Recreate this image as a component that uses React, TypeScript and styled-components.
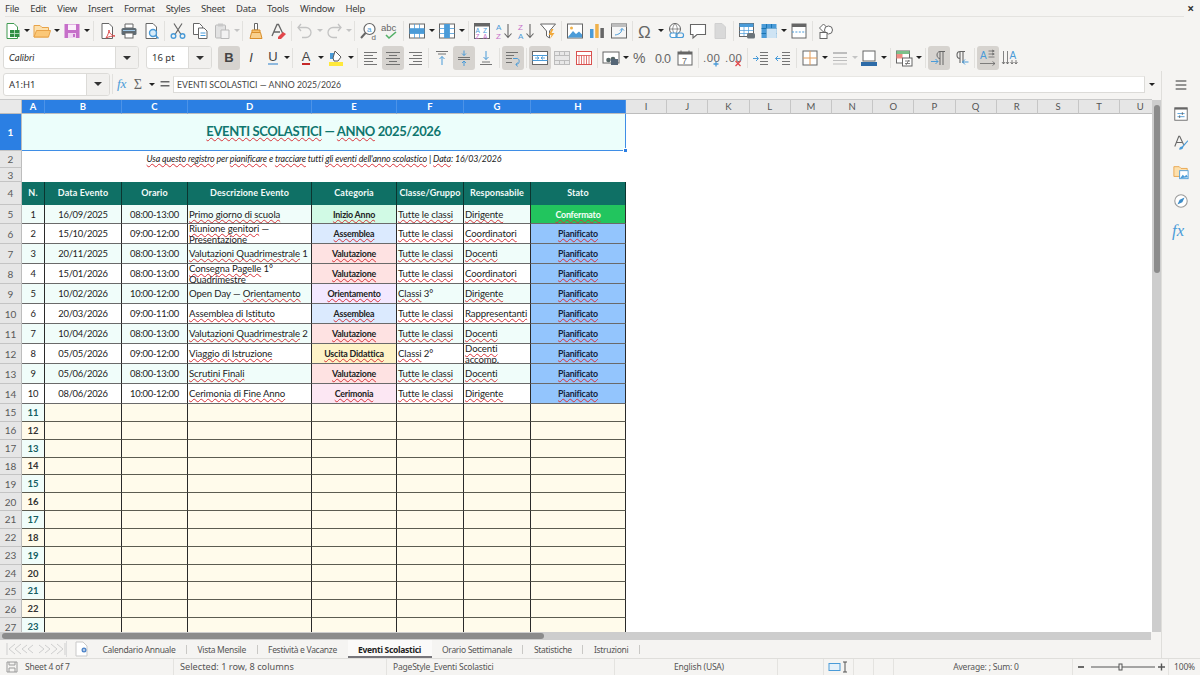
import React, { ReactNode } from 'react';
import styled, { createGlobalStyle } from 'styled-components';

const Global = createGlobalStyle`
  html, body { margin: 0; padding: 0; background: #f5f4f2; }
  * { box-sizing: border-box; }
`;
const UI = `"Noto Sans", "Open Sans", sans-serif`;
const CELL = `Lato, "Liberation Sans", sans-serif`;
const COLS = '22px 23px 77px 66px 124px 85px 67px 67px 95px';

const Window = styled.div`
  width: 1200px; height: 675px; overflow: hidden; display: flex; flex-direction: column;
  background: #f5f4f2; font-family: ${UI}; color: #3c3c3c;
`;
const MenuBar = styled.div`
  height: 17px; display: flex; align-items: center; justify-content: space-between; padding-left: 5px;
`;
const MenuList = styled.div`display: flex; gap: 11px; font-size: 9.5px; letter-spacing: -.25px; height: 17px; align-items: center; width: 1179px; border-bottom: 1px solid #e4e3e0;`;
const CloseMark = styled.div`width: 16px; padding-right: 6px; text-align: right; font-size: 12px; font-weight: 700; color: #333;`;
const ToolRow = styled.div`height: 27px; display: flex; align-items: center; padding-left: 1px;`;
const ToolRowTwo = styled(ToolRow)`padding-left: 3px;`;
const ToolBtn = styled.div<{ $active?: boolean }>`
  width: 22px; height: 24px; flex: none; display: flex; align-items: center; justify-content: center; border-radius: 3px;
  background: ${p => (p.$active ? '#d6d3cf' : 'transparent')};
`;
const Arrow = styled.div<{ $dim?: boolean; $narrow?: boolean }>`
  width: ${p => (p.$dim ? 7 : p.$narrow ? 6 : 8)}px; flex: none; display: flex; justify-content: center;
  &::after { content: ''; border-left: 3px solid transparent; border-right: 3px solid transparent; border-top: 3px solid ${p => (p.$dim ? '#c4c4c4' : '#222')}; }
`;
const Sep = styled.div`width: 1px; height: 20px; margin: 0 2px; flex: none; background: #e2e1de;`;
const Combo = styled.div<{ $w: number; $btn: number; $after?: number }>`
  width: ${p => p.$w}px; height: 23px; flex: none; display: flex; background: #fff; border: 1px solid #dcdbd8; border-radius: 3px; overflow: hidden;
  margin-right: ${p => p.$after ?? 0}px;
  & > span { flex: 1; padding-left: 5px; font-size: 9.5px; line-height: 21px; color: #333; }
  & > i { width: ${p => p.$btn}px; flex: none; background: #f1f0ee; border-left: 1px solid #dcdbd8; display: flex; align-items: center; justify-content: center; }
  & > i::after { content: ''; border-left: 4px solid transparent; border-right: 4px solid transparent; border-top: 4px solid #333; }
`;
const ItalicCombo = styled(Combo)`& > span { font-family: ${CELL}; font-style: italic; font-size: 9.5px; }`;
const Glyph = styled.span<{ $weight?: number; $italic?: boolean; $line?: string }>`
  font-family: "Liberation Sans", sans-serif; font-size: 13px; color: #444; font-weight: ${p => p.$weight ?? 400};
  font-style: ${p => (p.$italic ? 'italic' : 'normal')};
  border-bottom: ${p => (p.$line ? `2px solid ${p.$line}` : 'none')}; line-height: 13px;
`;
const Body = styled.div`flex: 1; min-height: 0; display: flex;`;
const LeftPane = styled.div`width: 1161px; display: flex; flex-direction: column;`;
const SideBar = styled.div`width: 39px; border-left: 1px solid #dfdedb; display: flex; flex-direction: column; align-items: center; padding-top: 3px; gap: 7px;`;
const SideBtn = styled.div`height: 22px; width: 22px; display: flex; align-items: center; justify-content: center;`;
const FormulaBar = styled.div`height: 29px; display: flex; align-items: center; padding: 0 3px 3px;`;
const FxBtn = styled.div<{ $before?: number }>`width: 16px; flex: none; display: flex; justify-content: center; margin-left: ${p => p.$before ?? 0}px;`;
const FormulaInput = styled.div`
  width: 972px; height: 17px; flex: none; margin-right: 3px; background: #fff; border: 1px solid #dcdbd8; border-top-color: #e8e7e4;
  padding-left: 3px; font-family: ${CELL}; font-size: 8.7px; line-height: 15px; color: #444;
`;
const Sheet = styled.div`flex: 1; min-height: 0; display: flex;`;
const Grid = styled.div`width: 1152px; overflow: hidden; background: #fff; border-top: 1px solid #c9c9c9; margin-top: -1px;`;
const Row = styled.div<{ $h: number }>`display: grid; grid-template-columns: ${COLS}; height: ${p => p.$h}px; font-family: ${CELL};`;
const HeadRow = styled.div`display: flex; height: 14px;`;
const Corner = styled.div`width: 22px; flex: none; background: #e9e9e9; border-right: 1px solid #bdbdbd; border-bottom: 1px solid #bdbdbd;`;
const ColHead = styled.div<{ $w: number; $sel?: boolean }>`
  width: ${p => p.$w}px; flex: none; font-size: 9.5px; line-height: 13px; text-align: center;
  background: ${p => (p.$sel ? '#2b7fe3' : '#e6e6e6')}; color: ${p => (p.$sel ? '#fff' : '#555')};
  font-weight: ${p => (p.$sel ? 700 : 400)}; font-family: ${CELL};
  border-right: 1px solid ${p => (p.$sel ? '#4c93e8' : '#c6c6c6')}; border-bottom: 1px solid #bdbdbd;
`;
const RowHead = styled.div<{ $sel?: boolean }>`
  display: flex; align-items: center; justify-content: center; font-size: 10px;
  background: ${p => (p.$sel ? '#2b7fe3' : '#e6e6e6')}; color: ${p => (p.$sel ? '#fff' : '#5a5a5a')}; font-weight: ${p => (p.$sel ? 700 : 400)};
  border-right: 1px solid #bdbdbd; border-bottom: 1px solid #c4c4c4;
`;
const TitleCell = styled.div`
  grid-column: span 8; position: relative; background: #ecfefb; border: 1px solid #3f8ee6; border-left: none; border-top: none;
  text-align: center; color: #0f766e; font-weight: 700; font-size: 13px; letter-spacing: -.38px; line-height: 35px;
`;
const Handle = styled.div`position: absolute; right: -3px; bottom: -3px; width: 5px; height: 5px; background: #2b7fe3; border: 1px solid #fff;`;
const NoteCell = styled.div`grid-column: span 8; text-align: center; font-style: italic; font-size: 8.9px; letter-spacing: -.13px; line-height: 16px; color: #222;`;
const BlankCell = styled.div`grid-column: span 8;`;
const HeadCell = styled.div`
  display: flex; align-items: center; justify-content: center; background: #0f7065; color: #f2fbf9; font-size: 9px; font-weight: 700;
  border-right: 1px solid #0b3530; letter-spacing: .1px; padding-bottom: 2px;
`;
const DataCell = styled.div<{ $bg: string; $center?: boolean; $bold?: boolean; $tight?: boolean; $color?: string }>`
  display: flex; align-items: center; justify-content: ${p => (p.$center ? 'center' : 'flex-start')}; text-align: ${p => (p.$center ? 'center' : 'left')};
  padding: 0 1px; background: ${p => p.$bg}; color: ${p => p.$color ?? '#222'}; font-size: ${p => (p.$bold ? 8.9 : p.$tight ? 9.4 : 9.6)}px; line-height: 11px;
  letter-spacing: ${p => (p.$bold ? '-.2px' : p.$tight ? '-.25px' : '-.1px')};
  font-weight: ${p => (p.$bold ? 700 : 400)}; border-right: 1px solid #2a2a2a; border-bottom: 1.5px solid #6a6a6a; overflow: hidden; white-space: pre-line;
`;
const CellText = styled.div`min-width: 0;`;
const BlankData = styled.div<{ $bg: string; $color?: string }>`
  display: flex; align-items: center; justify-content: center; background: ${p => p.$bg}; color: ${p => p.$color ?? '#333'}; font-size: 9.5px; font-weight: 700;
  border-right: 1px solid #2a2a2a; border-bottom: 1px solid #5c5c50;
`;
const Sp = styled.span`text-decoration: underline wavy #d8343a 1px; text-underline-offset: 1px; text-decoration-skip-ink: none;`;
const VScroll = styled.div`width: 9px; background: #cdcdcd; padding: 5px 1px 0 2px; margin-top: 0;`;
const VThumb = styled.div`height: 168px; background: #8b8b8b; border-radius: 3px;`;
const HScroll = styled.div`height: 8px; flex: none; background: #cdcdcd; padding: 1px 0 0 2px; width: 1151px;`;
const HThumb = styled.div`height: 6px; width: 542px; background: #8b8b8b; border-radius: 3px;`;
const TabBar = styled.div`height: 18px; flex: none; display: flex; align-items: center; font-size: 8.5px; letter-spacing: -.3px; color: #555;`;
const TabNav = styled.div`width: 66px; height: 18px; flex: none; padding-left: 6px; display: flex; align-items: center;`;
const TabAdd = styled.div`width: 26px; flex: none; display: flex; align-items: center; border-left: 1px solid #ddd; padding-left: 8px;`;
const Tab = styled.div<{ $on?: boolean }>`
  height: 18px; display: flex; align-items: center; padding: 2px 10.5px 0; position: relative; white-space: nowrap;
  color: ${p => (p.$on ? '#222' : '#555')}; font-weight: ${p => (p.$on ? 700 : 400)};
  background: ${p => (p.$on ? '#fbfaf9' : 'transparent')};
  border-bottom: 2px solid ${p => (p.$on ? '#77767b' : 'transparent')};
`;
const TabDiv = styled.div`width: 1px; height: 9px; background: #c9c8c5; flex: none;`;
const StatusBar = styled.div`
  height: 17px; flex: none; display: grid; grid-template-columns: 173px 213px 228px 163px 46px 30px 20px 20px 179px 96px 32px;
  border-top: 1px solid #dfdedb; font-size: 8.5px; letter-spacing: -.2px; color: #555; line-height: 16px;
`;
const StatusCell = styled.div<{ $center?: boolean; $wide?: boolean }>`
  border-left: 1px solid #e4e3e0; padding-left: 6px; display: flex; align-items: center; gap: 7px;
  justify-content: ${p => (p.$center ? 'center' : 'flex-start')};
  font-size: ${p => (p.$wide ? '9.2px' : 'inherit')}; letter-spacing: ${p => (p.$wide ? '0' : 'inherit')};
  &:first-child { border-left: none; }
`;
const StatusFill = styled(StatusCell)`padding: 0; justify-content: center;`;

const Ic = ({ s = 18, children }: { s?: number; children: ReactNode }) => (
  <svg width={s} height={s} viewBox="0 0 18 18" fill="none">{children}</svg>
);
const doc = 'M4 1.5h7l3.5 3.5v11.5H4z';
const G = '#666666', B = '#4a9bd8', LG = '#9a9a9a';
const ICONS: Record<string, ReactNode> = {
  new: <><path d={doc} fill="#fff" stroke="#3f9a50" /><rect x="7" y="8" width="9.5" height="7" fill="#2f8f44" /><path d="M7 11.5h9.5M11.5 8v7" stroke="#c8e8cf" strokeWidth=".8" /></>,
  open: <><path d="M1 15V3.5h6l2 2h6.5V15z" fill="#fde0ad" stroke="#e8a349" /><path d="M1 15l2.5-6.5h14L15.5 15z" fill="#fbc878" stroke="#e8a349" /></>,
  save: <><path d="M1.5 2h15v14h-15z" fill="#c66fc9" /><rect x="5" y="2.5" width="8" height="5.5" fill="#fbeffb" /><rect x="5" y="11" width="8" height="5" fill="#f1d4f2" /><rect x="10" y="12" width="2" height="3" fill="#c66fc9" /></>,
  pdf: <><path d={doc} fill="#fff" stroke={G} /><path d="M8 16c2-3 3-6 3-8 0 3 2 5 6 6-3 0-6 .5-9 2z" stroke="#dd4b4b" fill="none" /></>,
  print: <><path d="M5 2h8v4H5z" fill="#fff" stroke={G} /><rect x="1.5" y="6" width="15" height="7" rx="1.5" fill="#5f6b73" /><rect x="5" y="11" width="8" height="5" fill="#fff" stroke={G} /><path d="M3 8.5h12" stroke="#9fc7e6" /></>,
  preview: <><path d={doc} fill="#fff" stroke={G} /><circle cx="11" cy="11" r="3.5" fill="#d7ebf8" stroke={B} strokeWidth="1.4" /><path d="M13.5 13.5l3 3" stroke={B} strokeWidth="1.6" /></>,
  cut: <><path d="M5 1.5l7 11M13 1.5l-7 11" stroke={G} strokeWidth="1.2" /><circle cx="4.5" cy="14" r="2.3" stroke={B} strokeWidth="1.4" /><circle cx="13.5" cy="14" r="2.3" stroke={B} strokeWidth="1.4" /></>,
  copy: <><path d="M2.5 1.5h6l3 3v8h-9z" fill="#fff" stroke={G} /><path d="M7.5 6h5.5l3 3v7.5H7.5z" fill="#fff" stroke={G} /><path d="M9.5 11h5M9.5 13.5h5" stroke={B} /></>,
  paste: <><rect x="2.5" y="3" width="10" height="13" rx="1" fill="#e2e2e2" stroke="#b9b9b9" /><rect x="5" y="1.5" width="5" height="3" fill="#c9c9c9" /><path d="M8 8h8v8.5H8z" fill="#f2f2f2" stroke="#b9b9b9" /></>,
  clone: <><path d="M7.5 1.5h3V8h-3z" fill="#fff" stroke={G} /><path d="M5 8h8v2.5H5z" fill="#f6c26f" stroke="#d98e2b" /><path d="M4.5 10.5h9l1.5 6H3z" fill="#f9d08d" stroke="#d98e2b" /></>,
  clear: <><path d="M3 14L8 2.5h1.5L14 12M5 10h6" stroke={G} strokeWidth="1.3" /><path d="M9 15l5-5 3 2-5 5H9z" fill="#e2474b" /></>,
  undo: <path d="M5 9l-3-3.5L5 2M2 5.5h8a5 5 0 0 1 0 10H6" stroke="#c3c3c3" strokeWidth="1.3" />,
  redo: <path d="M13 9l3-3.5L13 2M16 5.5H8a5 5 0 0 0 0 10h4" stroke="#c3c3c3" strokeWidth="1.3" />,
  find: <><circle cx="10.5" cy="7" r="5.5" fill="#fff" stroke={G} strokeWidth="1.2" /><path d="M6.5 11L2 16" stroke={G} strokeWidth="2" /><text x="8" y="10" fontSize="8" fill={B} fontFamily="Liberation Sans">a</text><text x="12.5" y="17.5" fontSize="8" fill={G} fontFamily="Liberation Sans">d</text></>,
  spell: <><text x="0" y="9" fontSize="9.5" fill={G} fontFamily="Liberation Sans">abc</text><path d="M5 13l3 3 7-6" stroke="#54b168" strokeWidth="1.6" /></>,
  trow: <><rect x="1.5" y="2" width="15" height="14" fill="#fff" stroke={G} /><rect x="1.5" y="7" width="15" height="4.5" fill={B} /><path d="M1.5 6.5h15M1.5 11.5h15M6.5 2v14M11.5 2v14" stroke={B} strokeWidth=".8" /></>,
  tcol: <><rect x="1.5" y="2" width="15" height="14" fill="#fff" stroke={G} /><rect x="6.5" y="2" width="5" height="14" fill={B} /><path d="M1.5 6.5h15M1.5 11.5h15M6.5 2v14M11.5 2v14" stroke={B} strokeWidth=".8" /></>,
  sort: <><rect x="1.5" y="1.5" width="15" height="15" fill="#fff" stroke={G} /><rect x="1.5" y="1.5" width="15" height="3" fill={G} /><text x="2.5" y="11" fontSize="6.5" fill={B} fontFamily="Liberation Sans">A</text><text x="10" y="11" fontSize="6.5" fill={B} fontFamily="Liberation Sans">Z</text><text x="2.5" y="16.5" fontSize="6.5" fill="#c66fc9" fontFamily="Liberation Sans">Z</text><text x="10" y="16.5" fontSize="6.5" fill="#c66fc9" fontFamily="Liberation Sans">A</text></>,
  asc: <><text x="1" y="8" fontSize="8" fill={B} fontFamily="Liberation Sans">A</text><text x="1" y="16.5" fontSize="8" fill="#c66fc9" fontFamily="Liberation Sans">Z</text><path d="M13 2v13M9.5 11.5L13 15.5l3.5-4" stroke={G} strokeWidth="1.1" /></>,
  desc: <><text x="1" y="8" fontSize="8" fill="#c66fc9" fontFamily="Liberation Sans">Z</text><text x="1" y="16.5" fontSize="8" fill={B} fontFamily="Liberation Sans">A</text><path d="M13 2v13M9.5 11.5L13 15.5l3.5-4" stroke={G} strokeWidth="1.1" /></>,
  filter: <><path d="M1.5 2h15l-6 7v7l-3-2V9z" fill="#fff" stroke={G} /><path d="M12.5 7l-3 6h3l-1.5 4 4.5-6h-3l2-4z" fill="#f2a93b" /></>,
  image: <><rect x="1.5" y="2" width="15" height="14" fill="#fff" stroke={G} /><circle cx="5.5" cy="6" r="1.5" fill="#f0b14a" /><path d="M2 15l5-6 3 3 3-2.5 3 3V15.5H2z" fill={B} /></>,
  chart: <><rect x="2" y="7" width="3.5" height="9" fill={B} /><rect x="7.2" y="2" width="3.5" height="14" fill="#f0b14a" /><rect x="12.4" y="6" width="3.5" height="10" fill={G} /></>,
  pivot: <><rect x="1.5" y="2" width="15" height="14" fill="#f6f6f6" stroke={G} /><rect x="1.5" y="2" width="15" height="3" fill="#bdbdbd" /><path d="M12 6.5c0 4-3 6-7 6.5M12 6.5l-2 2M12 6.5l2 2" stroke={B} /></>,
  omega: <text x="1" y="15.5" fontSize="17" fill={G} fontFamily="Liberation Sans">Ω</text>,
  link: <><circle cx="8" cy="7" r="5.5" fill="#fff" stroke={G} /><path d="M2.5 7h11M8 1.5c-3 3.5-3 7.5 0 11M8 1.5c3 3.5 3 7.5 0 11" stroke={G} strokeWidth=".7" /><rect x="3" y="11" width="7" height="4.5" rx="2" fill="#fff" stroke={B} strokeWidth="1.2" /><rect x="9" y="11" width="7.5" height="4.5" rx="2" fill="none" stroke={B} strokeWidth="1.2" /></>,
  comment: <path d="M1.5 2.5h15v10H8l-4 3.5v-3.5H1.5z" fill="#fff" stroke={G} strokeWidth="1.1" />,
  hdr: <path d="M4 1.5h7l3.5 3.5v11.5H4z" fill="#d9d9d9" stroke="#d0d0d0" />,
  area: <><rect x="1.5" y="1.5" width="14" height="13" fill="#fff" stroke={G} /><rect x="1.5" y="1.5" width="14" height="3.5" fill={B} /><path d="M1.5 8.5h14M1.5 11.5h14M6 5v9M10.5 5v9" stroke={B} strokeWidth=".7" /><rect x="9" y="11" width="8" height="5.5" rx="1.5" fill="#6b747a" /></>,
  freeze: <><rect x="1.5" y="2" width="15" height="14" fill={B} /><path d="M1.5 6.5h15M1.5 11.5h15M6.5 2v14M11.5 2v14" stroke="#0f6ba8" strokeWidth=".8" /><rect x="6.5" y="6.5" width="10" height="9.5" fill="#cfe4f4" /></>,
  split: <><rect x="2" y="2" width="14" height="14" fill="#fff" stroke={G} /><rect x="2" y="2" width="14" height="3" fill={G} /><path d="M2 10h14" stroke={B} strokeDasharray="2 1.4" /></>,
  shapes: <><path d="M6.5 2l4 4-4 4-4-4z" fill="#fff" stroke={G} /><circle cx="11.5" cy="8" r="4" fill="#fff" stroke={G} /><rect x="3" y="10.5" width="7" height="6" fill="#fff" stroke={G} /></>,
  left: <path d="M2 3.5h13M2 6.5h9M2 9.5h13M2 12.5h9M2 15.5h13" stroke={G} strokeWidth=".9" />,
  center: <path d="M2 3.5h14M5 6.5h8M2 9.5h14M5 12.5h8M2 15.5h14" stroke={G} strokeWidth=".9" />,
  right: <path d="M3 3.5h13M7 6.5h9M3 9.5h13M7 12.5h9M3 15.5h13" stroke={G} strokeWidth=".9" />,
  vtop: <><path d="M3 2.5h12M5 5h8" stroke={G} strokeWidth=".9" /><path d="M9 16V7.5M6.5 10L9 7.5l2.5 2.5" stroke={B} /></>,
  vmid: <><path d="M3 8.5h12M3 10.5h12" stroke={G} strokeWidth=".9" /><path d="M9 1.5v5M7 4.5l2 2 2-2M9 17v-5M7 14l2-2 2 2" stroke={B} /></>,
  vbot: <><path d="M3 15.5h12M5 13h8" stroke={G} strokeWidth=".9" /><path d="M9 2v8.5M6.5 8L9 10.5 11.5 8" stroke={B} /></>,
  wrap: <><path d="M2 3.5h12M2 6.5h8M2 9.5h6M2 13.5h6" stroke={G} strokeWidth=".9" /><path d="M9 9.5h4c3 0 3 6-1 6M13.5 13.5L12 15.5l1.5 2" stroke={B} /></>,
  merge: <><rect x="1.5" y="2.5" width="15" height="13" fill="#fff" stroke={G} /><path d="M1.5 6.5h15M1.5 11.5h15" stroke={B} /><path d="M4 9h4M14 9h-4M6 7.5L8 9l-2 1.5M12 7.5L10 9l2 1.5" stroke={B} strokeWidth=".9" /></>,
  mergeoff: <><rect x="1.5" y="2.5" width="15" height="13" fill="#e8e8e8" stroke="#bcbcbc" /><path d="M1.5 6.5h15M1.5 11.5h15M6.5 2.5v4M11.5 2.5v4M6.5 11.5v4M11.5 11.5v4" stroke="#bcbcbc" /></>,
  split2: <><rect x="1.5" y="2.5" width="15" height="13" fill="#fff" stroke="#d9504e" /><path d="M1.5 6.5h15M6.5 6.5v9M11.5 6.5v9M4 6.5v9M9 6.5v9M14 6.5v9" stroke="#d9504e" strokeWidth=".8" /></>,
  currency: <><rect x="1" y="3" width="16" height="11" fill="#fff" stroke={G} /><circle cx="6.5" cy="11" r="2.3" fill="#566" /><circle cx="11" cy="10" r="2.3" fill="#566" /><rect x="9" y="10" width="7" height="6" fill="#567" /></>,
  percent: <text x="1" y="14" fontSize="14" fill={G} fontFamily="Liberation Sans">%</text>,
  number: <text x="1" y="14" fontSize="12.5" fill={G} fontFamily="Liberation Sans" textLength="16">0.0</text>,
  date: <><rect x="2" y="3" width="14" height="13" fill="#fff" stroke={G} /><rect x="2" y="3" width="14" height="2.5" fill={G} /><path d="M5 1.5v3M13 1.5v3" stroke={G} /><text x="6" y="14.5" fontSize="9" fill={G} fontFamily="Liberation Sans">7</text></>,
  addd: <><text x="0" y="13" fontSize="11.5" fill={G} fontFamily="Liberation Sans" textLength="17">.00</text><path d="M13 12.5v5M10.5 15h5" stroke={B} strokeWidth="1.3" /></>,
  deld: <><text x="0" y="13" fontSize="11.5" fill={G} fontFamily="Liberation Sans" textLength="17">.00</text><path d="M10.5 12l5 5M15.5 12l-5 5" stroke="#e2474b" strokeWidth="1.3" /></>,
  indent: <><path d="M8 3.5h8M8 6.5h8M8 9.5h8M8 12.5h8M8 15.5h8" stroke={G} strokeWidth=".9" /><path d="M1 9.5h5M4 7l2.5 2.5L4 12" stroke={B} /></>,
  outdent: <><path d="M8 3.5h8M8 6.5h8M8 9.5h8M8 12.5h8M8 15.5h8" stroke={G} strokeWidth=".9" /><path d="M6.5 9.5h-5M4 7L1.5 9.5 4 12" stroke={B} /></>,
  borders: <><rect x="2" y="2" width="14" height="14" fill="#fff" stroke={G} /><path d="M9 2v14M2 9h14" stroke="#e39a55" /></>,
  lines: <path d="M2 3.5h14M2 4.5h14M2 8.5h14M2 11.5h14M2 15h14" stroke="#bdbdbd" />,
  bcolor: <><rect x="3" y="2" width="12" height="10" fill="#fff" stroke={G} /><rect x="1" y="13" width="16" height="4" fill="#2d6ba8" /></>,
  cond: <><rect x="1.5" y="2" width="13" height="12" fill="#fff" stroke={G} /><rect x="1.5" y="2" width="13" height="3" fill="#7cc08a" /><rect x="1.5" y="5" width="6" height="4.5" fill="#ef8d84" /><rect x="7.5" y="9" width="9.5" height="8" fill="#fff" stroke={G} /><path d="M10 12h5M10 14.5h5M14 11l-3 5" stroke={G} strokeWidth=".8" /></>,
  ltr: <><path d="M10 16V2.5h5M13 2.5V16M10 2.5c-4 0-4 7 0 7" stroke={G} /><path d="M1 12.5h7M5.5 10l2.5 2.5L5.5 15" stroke={B} /></>,
  rtl: <><path d="M8 14V2.5h5M11 2.5V14M8 2.5c-4 0-4 7 0 7" stroke={G} strokeWidth="1.1" /><path d="M16.5 13h-6M13 10.5L10.5 13l2.5 2.5" stroke={B} /></>,
  tbl: <><text x="1" y="10" fontSize="10" fill={B} fontFamily="Liberation Sans">A</text><path d="M9.5 2h6M13 1l2 1-2 1M9.5 5h6M13 4l2 1-2 1M9.5 8h6M1 14.5h15M13.5 12.5l2.5 2-2.5 2" stroke={G} strokeWidth=".8" /></>,
  ttb: <><text x="8.5" y="10" fontSize="10" fill={B} fontFamily="Liberation Sans">A</text><path d="M2.5 2v13M1 13l1.5 2 1.5-2M6.5 2v13M5 13l1.5 2 1.5-2M11 11v4M9.5 13l1.5 2 1.5-2M15 11v4M13.5 13l1.5 2 1.5-2" stroke={G} strokeWidth=".8" /></>,
  fx: <text x="1" y="14" fontSize="15" fontStyle="italic" fill={B} fontFamily="Liberation Serif">fx</text>,
  sigma: <text x="2" y="15" fontSize="16" fill={G} fontFamily="Liberation Serif">Σ</text>,
  eq: <path d="M4 6.5h10M4 11h10" stroke={G} strokeWidth="1.6" />,
  menu: <path d="M3 4.5h12M3 9h12M3 13.5h12" stroke="#333" strokeWidth="1.4" />,
  props: <><rect x="2" y="2" width="14" height="14" fill="#fff" stroke={G} /><rect x="2" y="2" width="14" height="2" fill={G} /><path d="M5 8.5h8M5 12h8" stroke={B} /><path d="M10.5 7v3M7.5 10.5v3" stroke={G} /></>,
  styles: <><path d="M2 13L6.5 1.5h1L12 11M4 8.5h6" stroke={G} strokeWidth="1.2" /><path d="M16.5 6L10 13c-2 0-3 1.5-3 3.5 3 0 4.5-1 4.5-3L17 7z" fill={B} /></>,
  gallery: <><path d="M1 14V3h6l2 2h7v9z" fill="#fde0ad" stroke="#e8a349" /><rect x="7.5" y="7.5" width="9.5" height="9" fill="#fff" stroke={B} /><path d="M8 16l3-4 2 2 2-2 2 3z" fill={B} /></>,
  nav: <><circle cx="9" cy="9" r="7" fill="#fff" stroke={LG} strokeWidth="1.2" /><path d="M13 5l-2.5 5.5L5 13l2.5-5.5z" fill="#3d8cc8" /></>,
};
const Tools = ({ items }: { items: string }) => (
  <>
    {items.split(' ').map((t, i) => {
      if (t === '|') return <Sep key={i} />;
      if (t === '>') return <Arrow key={i} />;
      if (t === '>g') return <Arrow key={i} $dim />;
      const on = t.endsWith('*');
      const n = on ? t.slice(0, -1) : t;
      return <ToolBtn key={i} $active={on}><Ic>{ICONS[n]}</Ic></ToolBtn>;
    })}
  </>
);
const w = (s: string) => <Sp>{s}</Sp>;
const ALL = w('Tutte le classi');
const cat: Record<string, [string, string]> = {
  i: ['Inizio Anno', '#d1fae5'], a: ['Assemblea', '#dbeafe'], v: ['Valutazione', '#fee2e2'],
  o: ['Orientamento', '#f3e8ff'], u: ['Uscita Didattica', '#fef3c7'], c: ['Cerimonia', '#fce7f3'],
};
const rows: { d: string; t: string; desc: ReactNode; c: string; g: ReactNode; r: ReactNode }[] = [
  { d: '16/09/2025', t: '08:00-13:00', desc: w('Primo giorno di scuola'), c: 'i', g: ALL, r: w('Dirigente') },
  { d: '15/10/2025', t: '09:00-12:00', desc: <>{w('Riunione genitori')} —{'\n'}{w('Presentazione')}</>, c: 'a', g: ALL, r: w('Coordinatori') },
  { d: '20/11/2025', t: '08:00-13:00', desc: <>{w('Valutazioni Quadrimestrale')} 1</>, c: 'v', g: ALL, r: w('Docenti') },
  { d: '15/01/2026', t: '08:00-13:00', desc: <>{w('Consegna Pagelle')} 1°{'\n'}{w('Quadrimestre')}</>, c: 'v', g: ALL, r: w('Coordinatori') },
  { d: '10/02/2026', t: '10:00-12:00', desc: <>Open Day — {w('Orientamento')}</>, c: 'o', g: <>{w('Classi')} 3°</>, r: w('Dirigente') },
  { d: '20/03/2026', t: '09:00-11:00', desc: w('Assemblea di Istituto'), c: 'a', g: ALL, r: w('Rappresentanti') },
  { d: '10/04/2026', t: '08:00-13:00', desc: <>{w('Valutazioni Quadrimestrale')} 2</>, c: 'v', g: ALL, r: w('Docenti') },
  { d: '05/05/2026', t: '09:00-12:00', desc: w('Viaggio di Istruzione'), c: 'u', g: <>{w('Classi')} 2°</>, r: <>{w('Docenti')}{'\n'}{w('accomp.')}</> },
  { d: '05/06/2026', t: '08:00-13:00', desc: w('Scrutini Finali'), c: 'v', g: ALL, r: w('Docenti') },
  { d: '08/06/2026', t: '10:00-12:00', desc: w('Cerimonia di Fine Anno'), c: 'c', g: ALL, r: w('Dirigente') },
];
const colWidths: [string, number][] = [['A', 23], ['B', 77], ['C', 66], ['D', 124], ['E', 85], ['F', 67], ['G', 67], ['H', 95]];
const freeCols = 'IJKLMNOPQRSTU'.split('');
const heads = ['N.', 'Data Evento', 'Orario', 'Descrizione Evento', 'Categoria', 'Classe/Gruppo', 'Responsabile', 'Stato'];
const blanks = Array.from({ length: 13 }, (_, i) => i);
const tabs = ['Calendario Annuale', 'Vista Mensile', 'Festività e Vacanze', 'Eventi Scolastici', 'Orario Settimanale', 'Statistiche', 'Istruzioni'];

export default function App() {
  return (
    <Window>
      <Global />
      <MenuBar>
        <MenuList>{['File', 'Edit', 'View', 'Insert', 'Format', 'Styles', 'Sheet', 'Data', 'Tools', 'Window', 'Help'].map(m => <span key={m}>{m}</span>)}</MenuList>
        <CloseMark>×</CloseMark>
      </MenuBar>
      <ToolRow><Tools items="new > open > save > | pdf print preview | cut copy paste >g | clone clear | undo >g redo >g | find spell | trow > tcol > | sort asc desc filter | image chart pivot | omega > link comment hdr | area freeze > split | shapes" /></ToolRow>
      <ToolRowTwo>
        <ItalicCombo $w={136} $btn={23} $after={7}><span>Calibri</span><i /></ItalicCombo>
        <Combo $w={66} $btn={23} $after={6}><span>16 pt</span><i /></Combo>
        <ToolBtn $active><Glyph $weight={700}>B</Glyph></ToolBtn>
        <ToolBtn><Glyph $italic>I</Glyph></ToolBtn>
        <ToolBtn><Glyph $line="#8fb9de">U</Glyph></ToolBtn><Arrow $narrow /><Sep />
        <ToolBtn><Glyph $line="#c62828">A</Glyph></ToolBtn><Arrow />
        <ToolBtn><Ic><rect x="2" y="13" width="14" height="4" fill="#ffe93b" /><path d="M3 4h6v6H3z" fill="#4a9bd8" /><path d="M8 2l6 6-3 4H7l-1-3z" fill="#fff" stroke="#5a5a5a" /></Ic></ToolBtn><Arrow /><Sep />
        <Tools items="left center* right | vtop vmid* vbot | wrap* | merge* mergeoff split2 | currency > percent number date | addd deld | indent outdent | borders > lines >g bcolor > | cond > | ltr* rtl | tbl* ttb" />
      </ToolRowTwo>
      <Body>
        <LeftPane>
          <FormulaBar>
            <Combo $w={107} $btn={23}><span>A1:H1</span><i /></Combo>
            <Sep />
            <FxBtn $before={1}><Ic>{ICONS.fx}</Ic></FxBtn>
            <FxBtn><Ic>{ICONS.sigma}</Ic></FxBtn>
            <Arrow />
            <FxBtn $before={1}><Ic>{ICONS.eq}</Ic></FxBtn>
            <FormulaInput>EVENTI SCOLASTICI — ANNO 2025/2026</FormulaInput>
            <Arrow />
          </FormulaBar>
          <Sheet>
            <Grid>
              <HeadRow>
                <Corner />
                {colWidths.map(([n, wd]) => <ColHead key={n} $w={wd} $sel>{n}</ColHead>)}
                {freeCols.map(n => <ColHead key={n} $w={41.2}>{n}</ColHead>)}
              </HeadRow>
              <Row $h={37}><RowHead $sel>1</RowHead><TitleCell>{w('EVENTI SCOLASTICI')} — {w('ANNO')} 2025/2026<Handle /></TitleCell></Row>
              <Row $h={17}><RowHead>2</RowHead><NoteCell>{w('Usa questo registro')} per {w('pianificare')} e {w('tracciare')} tutti {w("gli eventi dell'anno scolastico")} | {w('Data')}: 16/03/2026</NoteCell></Row>
              <Row $h={14}><RowHead>3</RowHead><BlankCell /></Row>
              <Row $h={23}><RowHead>4</RowHead>{heads.map(h => <HeadCell key={h}>{h}</HeadCell>)}</Row>
              {rows.map((r, i) => {
                const bg = i % 2 === 0 ? '#f0fdfa' : '#ffffff';
                const [label, cbg] = cat[r.c];
                const conf = i === 0;
                return (
                  <Row key={i} $h={i === 0 ? 19 : 20}>
                    <RowHead>{i + 5}</RowHead>
                    <DataCell $bg={bg} $center $tight><CellText>{i + 1}</CellText></DataCell>
                    <DataCell $bg={bg} $center $tight><CellText>{r.d}</CellText></DataCell>
                    <DataCell $bg={bg} $center $tight><CellText>{r.t}</CellText></DataCell>
                    <DataCell $bg={bg}><CellText>{r.desc}</CellText></DataCell>
                    <DataCell $bg={cbg} $center $bold><CellText>{w(label)}</CellText></DataCell>
                    <DataCell $bg={bg}><CellText>{r.g}</CellText></DataCell>
                    <DataCell $bg={bg}><CellText>{r.r}</CellText></DataCell>
                    <DataCell $bg={conf ? '#22c55e' : '#93c5fd'} $center $bold $color={conf ? '#f4fff7' : '#15233b'}><CellText>{w(conf ? 'Confermato' : 'Pianificato')}</CellText></DataCell>
                  </Row>
                );
              })}
              {blanks.map(i => (
                <Row key={i} $h={17.85}>
                  <RowHead>{i + 15}</RowHead>
                  <BlankData $bg={i % 2 === 0 ? '#f0fdfa' : '#fffbeb'} $color={i % 2 === 0 ? '#155e63' : '#333'}>{i + 11}</BlankData>
                  {[0, 1, 2, 3, 4, 5, 6].map(c => <BlankData key={c} $bg="#fffbeb" />)}
                </Row>
              ))}
            </Grid>
            <VScroll><VThumb /></VScroll>
          </Sheet>
          <HScroll><HThumb /></HScroll>
          <TabBar>
            <TabNav>
              <svg width="60" height="14" viewBox="0 0 60 14" fill="none" stroke="#cfcfcf">
                <path d="M1 1v12M9 2L3 7l6 5M15 2L9 7l6 5M21 3l-5 4 5 4M27 3l-5 4 5 4M33 3l5 4-5 4M39 3l5 4-5 4M45 2l6 5-6 5M51 2l6 5-6 5M59 1v12" />
              </svg>
            </TabNav>
            <TabAdd>
              <svg width="14" height="16" viewBox="0 0 14 16" fill="none"><path d="M1 1h7l4 4v10H1z" fill="#fff" stroke="#c9c9c9" /><circle cx="9" cy="9" r="2.5" fill="#4a82c8" /><path d="M7.8 9h2.4M9 7.8v2.4" stroke="#fff" strokeWidth=".7" /></svg>
            </TabAdd>
            {tabs.map((t, i) => (
              <React.Fragment key={t}>
                <Tab $on={i === 3}>{t}</Tab>
                {i !== 2 && i !== 3 ? <TabDiv /> : null}
              </React.Fragment>
            ))}
          </TabBar>
        </LeftPane>
        <SideBar>
          {['menu', 'props', 'styles', 'gallery', 'nav', 'fx'].map(n => (
            <SideBtn key={n}><Ic s={n === 'fx' ? 20 : 16}>{ICONS[n]}</Ic></SideBtn>
          ))}
        </SideBar>
      </Body>
      <StatusBar>
        <StatusCell>
          <svg width="12" height="12" viewBox="0 0 12 12" fill="none" stroke="#9a9a9a"><path d="M1 1h10v10H1z" /><path d="M3 1v3h6V1M3 11V7h6v4" /></svg>
          <span>Sheet 4 of 7</span>
        </StatusCell>
        <StatusCell $wide>Selected: 1 row, 8 columns</StatusCell>
        <StatusCell>PageStyle_Eventi Scolastici</StatusCell>
        <StatusCell $center>English (USA)</StatusCell>
        <StatusCell />
        <StatusFill>
          <svg width="22" height="12" viewBox="0 0 22 12" fill="none"><rect x="1" y="2.5" width="11" height="7" fill="#e6f1fa" stroke="#4a9bd8" /><path d="M15 1h4M15 11h4M17 1v10" stroke="#555" /></svg>
        </StatusFill>
        <StatusCell />
        <StatusCell />
        <StatusCell $center>Average: ; Sum: 0</StatusCell>
        <StatusFill>
          <svg width="90" height="12" viewBox="0 0 90 12" fill="none" stroke="#555"><path d="M2 6h6M15 6h64" strokeWidth="1" /><path d="M2 6h6M82 6h7M85.5 2.5v7" strokeWidth="1.4" /><rect x="43" y="3" width="3" height="6" fill="#f5f4f2" /></svg>
        </StatusFill>
        <StatusFill>100%</StatusFill>
      </StatusBar>
    </Window>
  );
}
